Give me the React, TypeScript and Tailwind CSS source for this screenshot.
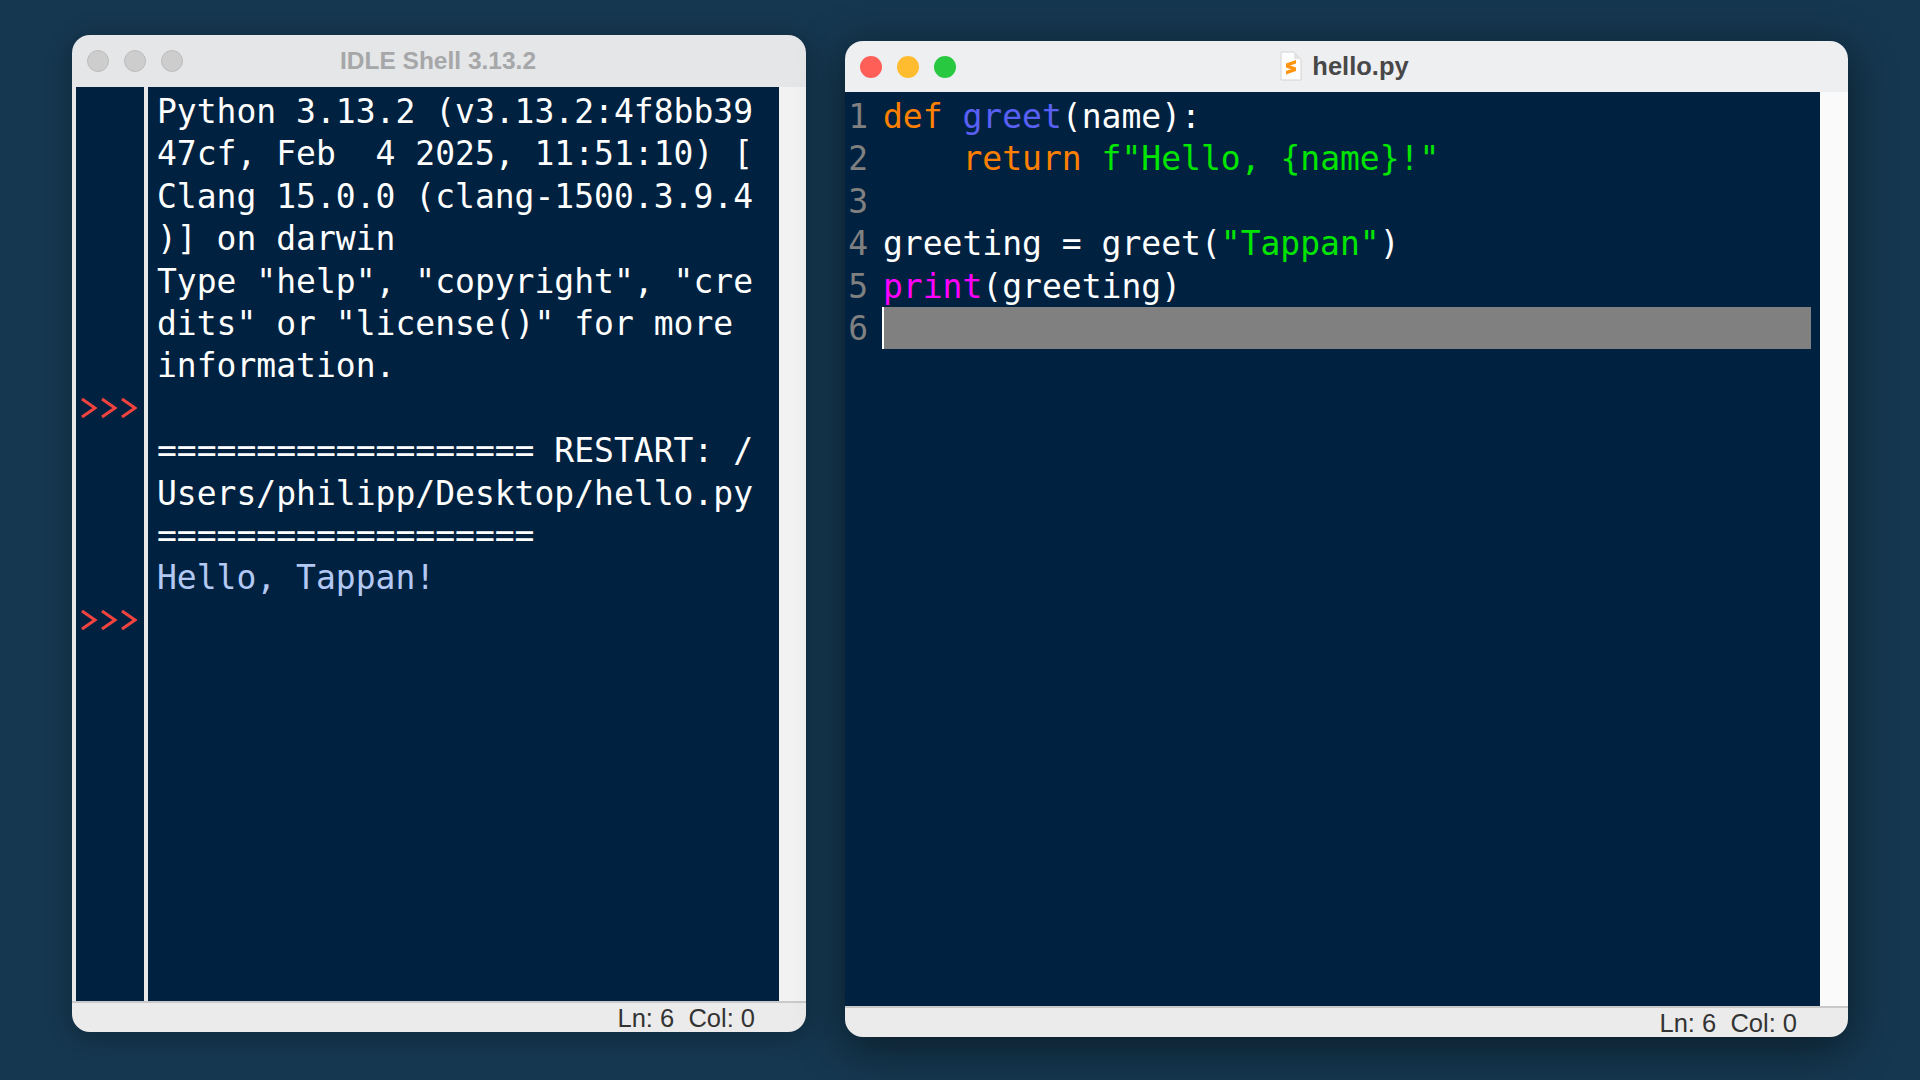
const mono = "font-['DejaVu_Sans_Mono','Liberation_Mono',monospace] text-[33px] leading-[42.4px] whitespace-pre";

const shellLines = [
    'Python 3.13.2 (v3.13.2:4f8bb39',
    '47cf, Feb  4 2025, 11:51:10) [',
    'Clang 15.0.0 (clang-1500.3.9.4',
    ')] on darwin',
    'Type "help", "copyright", "cre',
    'dits" or "license()" for more',
    'information.',
    ' ',
    '=================== RESTART: /',
    'Users/philipp/Desktop/hello.py',
    '===================',
];

const Prompt = () => (
    <svg width="56" height="42" viewBox="0 0 56 42" className="block" fill="none" stroke="#f4433f" strokeWidth="3">
        <path d="M1 12l13 9-13 9M21 12l13 9-13 9M41 12l13 9-13 9" />
    </svg>
);

const FileIcon = () => (
    <svg width="22" height="30" viewBox="0 0 22 30">
        <path d="M1 1h13l7 7v21H1z" fill="#fdfdfd" stroke="#d4d4d4" />
        <path d="M14 1v7h7z" fill="#e4e4e4" />
        <path d="M6 12.5L16 9v3.5L6 16zM6 13l10 3.5V20L6 16.5zM6 20l10-3.5V20L6 23.5z" fill="#ff9410" />
    </svg>
);

const StatusBar = () => (
    <div className="h-[31px] shrink-0 flex items-center justify-end border-t-2 border-[#c9c9c9] bg-[#ebebeb] pt-[2px] pr-[51px] font-['Liberation_Sans',sans-serif] text-[25.5px] text-[#333] whitespace-pre">
        Ln: 6{"  "}Col: 0
    </div>
);

export default function App() {
    return (
        <div className="w-[1920px] h-[1080px] overflow-hidden flex items-start gap-[39px] pl-[72px] bg-[#15374f]">
            <div className="mt-[35px] w-[734px] h-[997px] flex flex-col rounded-[18px] overflow-hidden shadow-[0_4px_26px_rgba(0,0,0,0.28)]">
                <div className="h-[52px] shrink-0 flex items-center gap-[15px] pl-[15px] bg-[#e5e6e8]">
                    <span className="w-[22px] h-[22px] rounded-full bg-[#cdcdcd] border border-[#bcbcbc]" />
                    <span className="w-[22px] h-[22px] rounded-full bg-[#cdcdcd] border border-[#bcbcbc]" />
                    <span className="w-[22px] h-[22px] rounded-full bg-[#cdcdcd] border border-[#bcbcbc]" />
                    <span className="flex-1 pr-[128px] text-center font-['Liberation_Sans',sans-serif] font-bold text-[24.5px] text-[#a6a7a9]">IDLE Shell 3.13.2</span>
                </div>
                <div className="flex-1 flex min-h-0 bg-[#f2f2f2]">
                    <div className="w-[4px] bg-[#e8e8e8]" />
                    <div className="w-[68px] bg-[#002240] pt-[3px] pl-[5px]">
                        <div className="mt-[297px]"><Prompt /></div>
                        <div className="mt-[170px]"><Prompt /></div>
                    </div>
                    <div className="w-[4px] bg-[#e8e8e8]" />
                    <div className={`w-[631px] bg-[#002240] pt-[4px] pl-[9px] text-white ${mono}`}>
                        {shellLines.map((line, i) => (
                            <div key={i}>{line}</div>
                        ))}
                        <div className="text-[#b4c8f4]">Hello, Tappan!</div>
                    </div>
                    <div className="flex-1" />
                </div>
                <StatusBar />
            </div>

            <div className="mt-[41px] w-[1003px] h-[996px] flex flex-col rounded-[18px] overflow-hidden shadow-[0_10px_44px_rgba(0,0,0,0.5)]">
                <div className="h-[51px] shrink-0 flex items-center gap-[15px] pl-[15px] bg-[#eeeff1]">
                    <span className="w-[22px] h-[22px] rounded-full bg-[#ff5f57]" />
                    <span className="w-[22px] h-[22px] rounded-full bg-[#febc2e]" />
                    <span className="w-[22px] h-[22px] rounded-full bg-[#28c840]" />
                    <span className="flex-1 flex items-center justify-center gap-[10px] pr-[130px] pb-[1px] font-['Liberation_Sans',sans-serif] font-bold text-[25.5px] text-[#484848]">
                        <FileIcon />
                        hello.py
                    </span>
                </div>
                <div className="flex-1 flex min-h-0 bg-[#fafafa]">
                    <div className={`w-[975px] bg-[#002240] pt-[3px] text-white ${mono}`}>
                        <CodeLine n={1}><span className="text-[#ff8000]">def</span> <span className="text-[#5a60f5]">greet</span>(name):</CodeLine>
                        <CodeLine n={2}>    <span className="text-[#ff8000]">return</span> <span className="text-[#00e600]">f"Hello, {"{name}"}!"</span></CodeLine>
                        <CodeLine n={3}> </CodeLine>
                        <CodeLine n={4}>greeting = greet(<span className="text-[#00e600]">"Tappan"</span>)</CodeLine>
                        <CodeLine n={5}><span className="text-[#ff00ff]">print</span>(greeting)</CodeLine>
                        <div className="flex h-[42.4px]">
                            <span className="w-[20px] ml-[3px] mr-[14px] pt-[1px] text-right text-[#808080]">6</span>
                            <div className="w-[929px] bg-[#808080] border-l-2 border-white" />
                        </div>
                    </div>
                    <div className="flex-1" />
                </div>
                <StatusBar />
            </div>
        </div>
    );
}

function CodeLine({ n, children }: { n: number; children: React.ReactNode }) {
    return (
        <div className="flex h-[42.4px] pt-[1px]">
            <span className="w-[20px] ml-[3px] mr-[15px] text-right text-[#808080]">{n}</span>
            <span>{children}</span>
        </div>
    );
}
